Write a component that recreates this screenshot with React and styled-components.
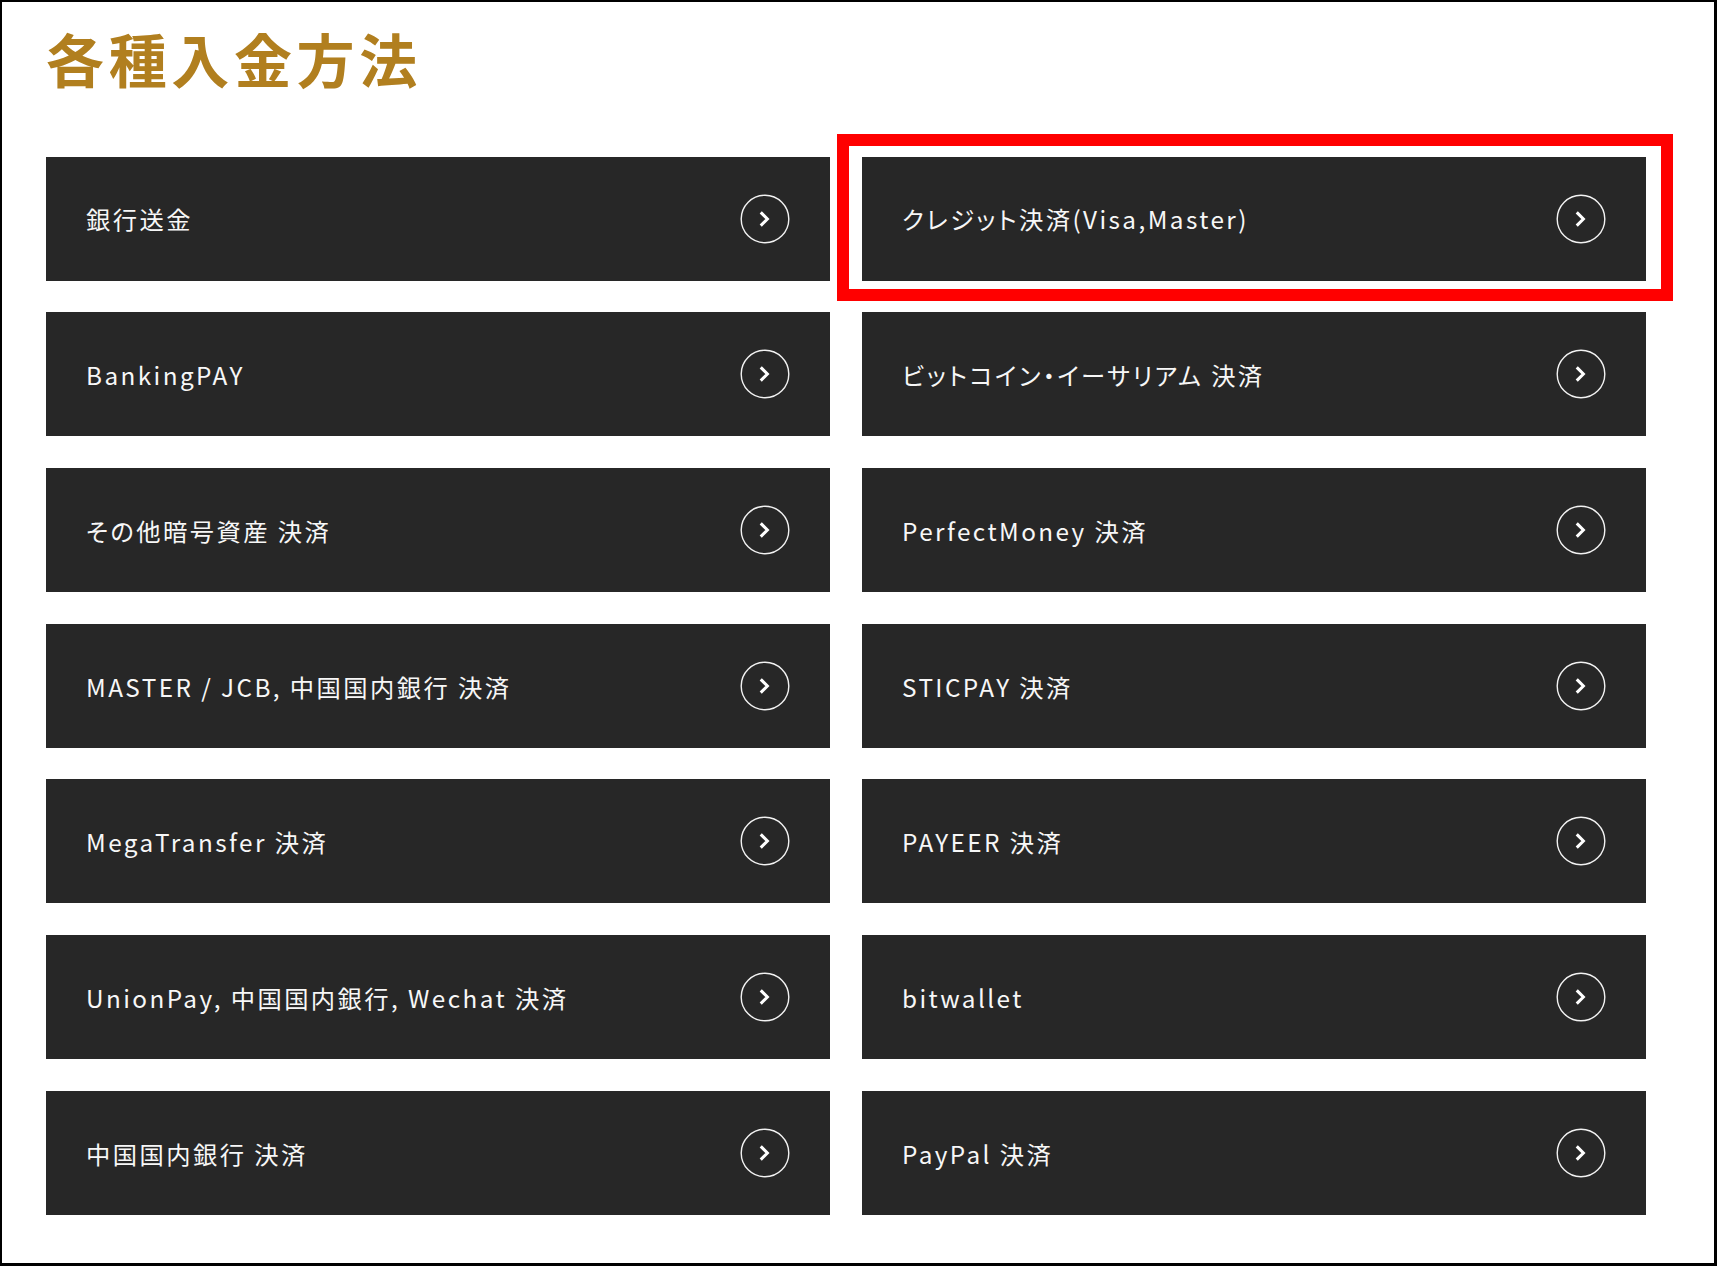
import styled, { createGlobalStyle } from "styled-components";

const methods = [
  { label: "銀行送金" },
  { label: "クレジット決済(Visa,Master)", highlighted: true },
  { label: "BankingPAY" },
  { label: "ビットコイン・イーサリアム 決済" },
  { label: "その他暗号資産 決済" },
  { label: "PerfectMoney 決済" },
  { label: "MASTER / JCB, 中国国内銀行 決済" },
  { label: "STICPAY 決済" },
  { label: "MegaTransfer 決済" },
  { label: "PAYEER 決済" },
  { label: "UnionPay, 中国国内銀行, Wechat 決済" },
  { label: "bitwallet" },
  { label: "中国国内銀行 決済" },
  { label: "PayPal 決済" },
];

function ArrowCircle() {
  return (
    <svg width="50" height="50" viewBox="0 0 50 50" fill="none">
      <circle cx="25" cy="25" r="23.8" stroke="#f2f2f2" strokeWidth="1.4" />
      <path
        d="M21.8 19.4 L27.4 25 L21.8 30.6"
        stroke="#ffffff"
        strokeWidth="3"
        strokeLinecap="square"
        strokeLinejoin="miter"
      />
    </svg>
  );
}

export default function App() {
  return (
    <>
      <GlobalStyle />
      <Page>
        <Title>各種入金方法</Title>
        <Grid>
          {methods.map((m) => (
            <Card key={m.label} href="#" highlighted={m.highlighted ? 1 : 0}>
              <Label>{m.label}</Label>
              <ArrowCircle />
            </Card>
          ))}
        </Grid>
      </Page>
    </>
  );
}

const GlobalStyle = createGlobalStyle`
  * {
    box-sizing: border-box;
  }

  body {
    margin: 0;
    background: #ffffff;
    font-family: "Noto Sans CJK JP", "Noto Sans", sans-serif;
  }
`;

const Page = styled.div`
  width: 100vw;
  height: 100vh;
  overflow: hidden;
  border-style: solid;
  border-color: #000;
  border-width: 2px 3px 3px 2px;
  padding: 22px 0 0 44px;
`;

const Title = styled.h1`
  margin: 0;
  font-size: 58px;
  font-weight: 700;
  line-height: 1.2;
  letter-spacing: 0.08em;
  color: #b17f1f;
`;

const Grid = styled.div`
  display: grid;
  grid-template-columns: 784px 784px;
  grid-auto-rows: 124px;
  column-gap: 32px;
  row-gap: 31.7px;
  margin-top: 63px;
`;

const Card = styled.a`
  position: relative;
  display: flex;
  align-items: center;
  justify-content: space-between;
  padding: 0 40px 0 40px;
  background: #272727;
  color: #f7f7f7;
  text-decoration: none;

  &::before {
    content: "";
    display: ${(props) => (props.highlighted ? "block" : "none")};
    position: absolute;
    top: -23px;
    left: -25px;
    right: -27px;
    bottom: -20px;
    border: 12.5px solid #ff0000;
    pointer-events: none;
  }
`;

const Label = styled.span`
  font-size: 24.3px;
  font-weight: 400;
  letter-spacing: 0.1em;
  line-height: 1;
  margin-top: 2px;
  font-feature-settings: "palt";
`;
